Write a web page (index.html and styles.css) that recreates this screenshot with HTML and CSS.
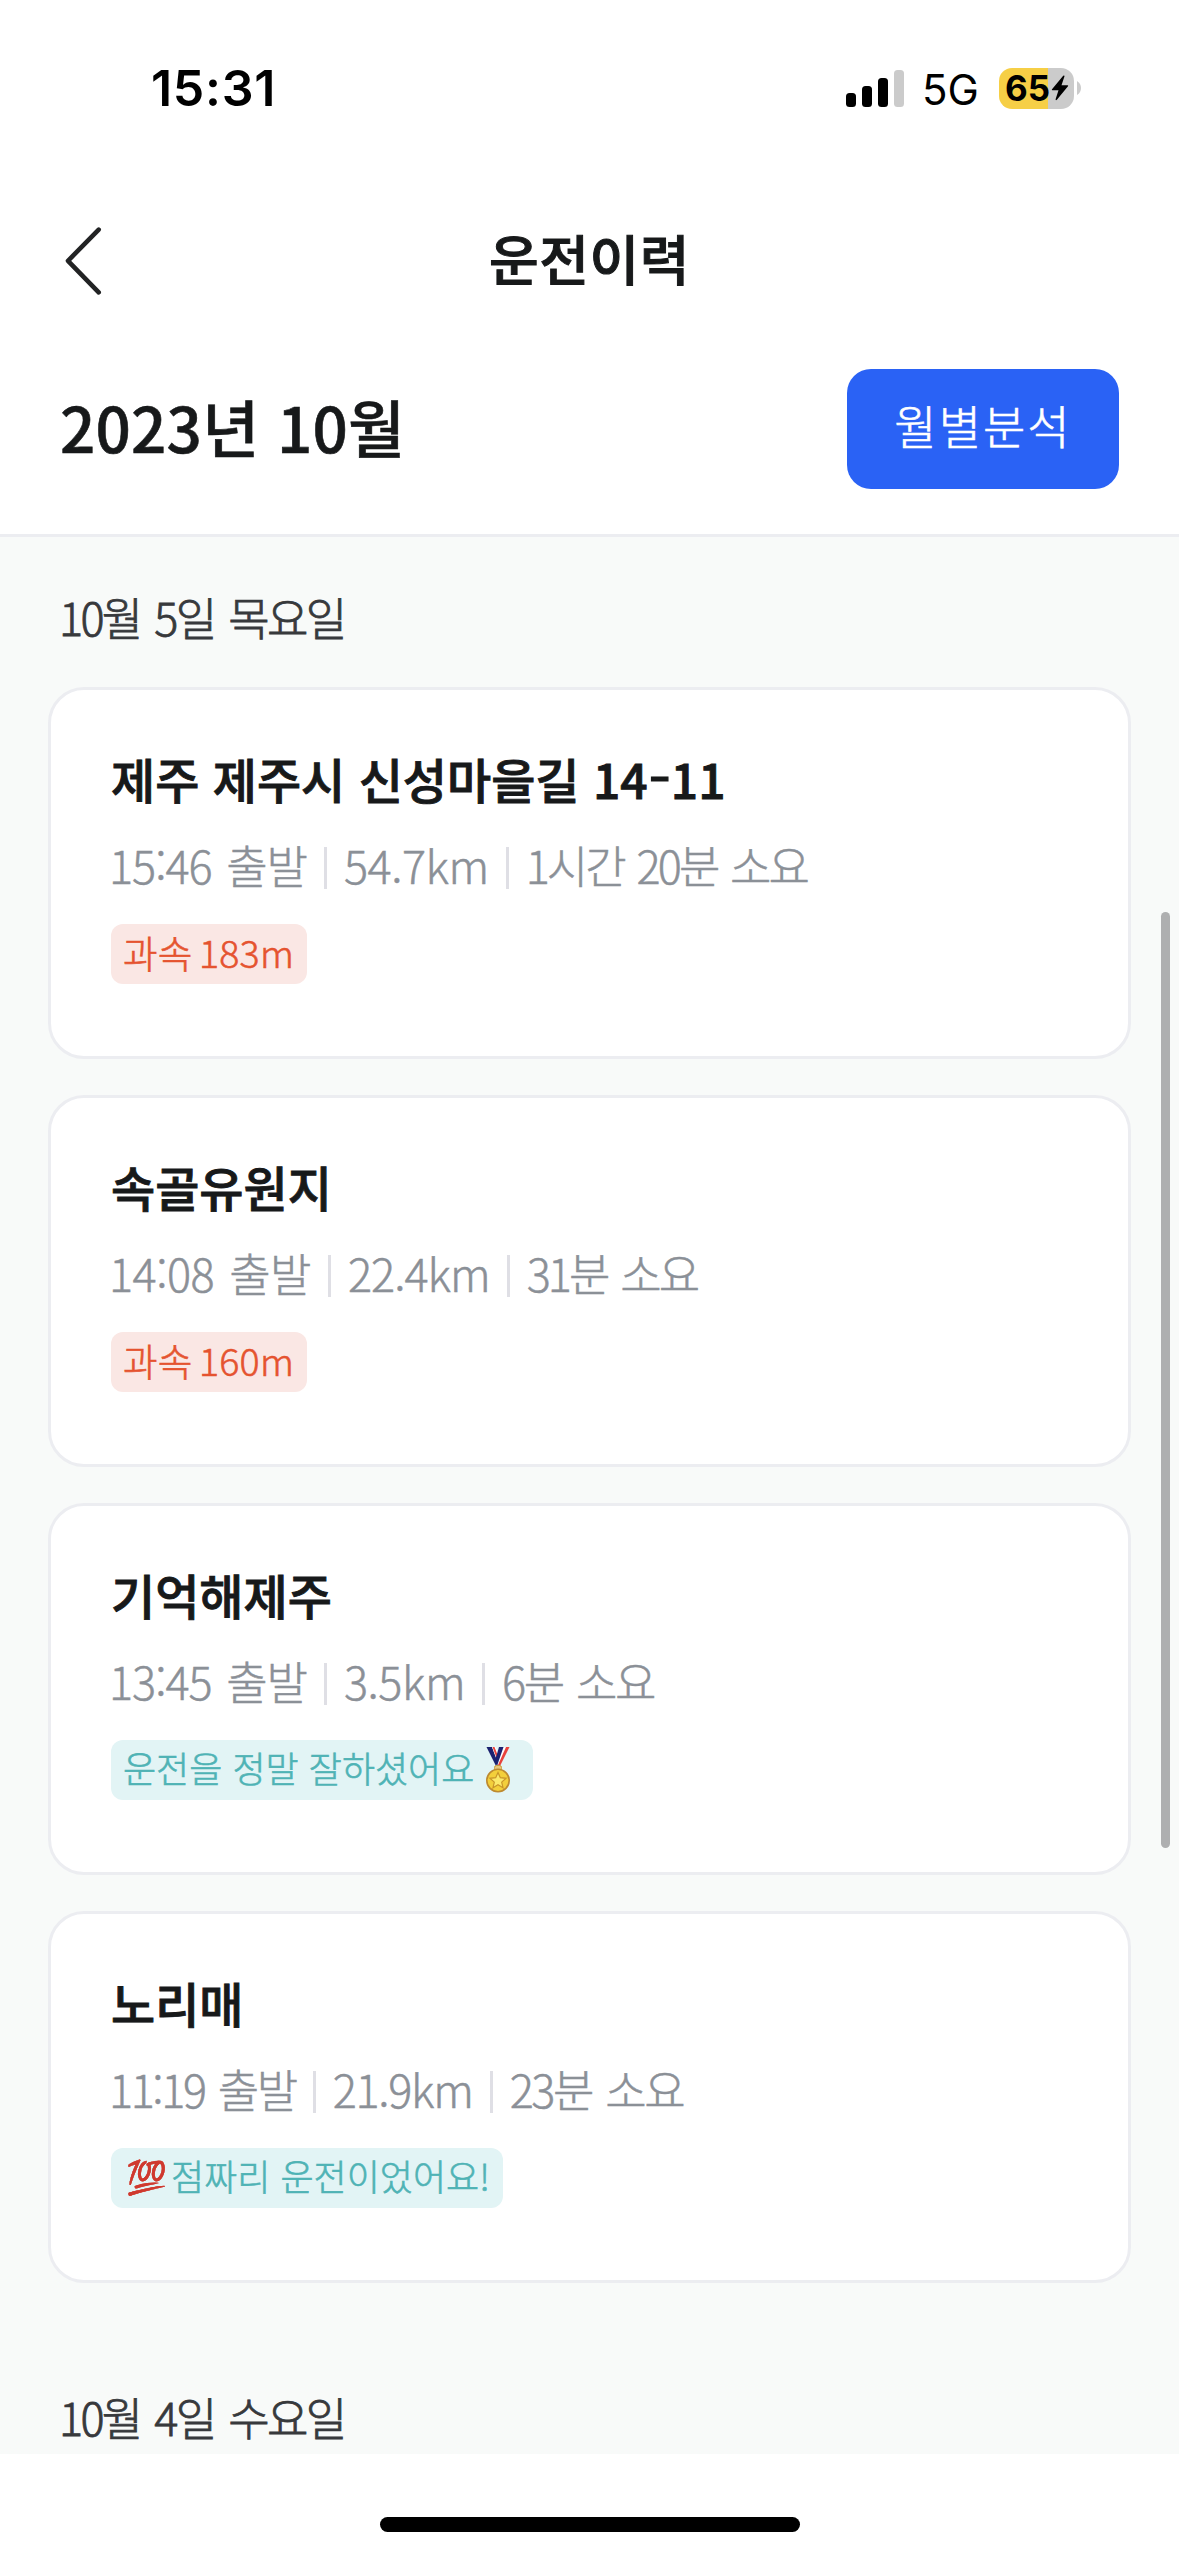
FILE: index.html
```html
<!DOCTYPE html>
<html lang="ko">
<head>
<meta charset="utf-8">
<title>운전이력</title>
<link rel="stylesheet" href="styles.css">
</head>
<body>
<div class="screen">
  <div class="status-bar">
    <span class="clock">15:31</span>
    <div class="status-icons">
      <svg class="signal" width="58" height="37" viewBox="0 0 58 37" aria-hidden="true">
        <rect x="0" y="23" width="10" height="14" rx="3.5"/>
        <rect x="16" y="16" width="10" height="21" rx="3.5"/>
        <rect x="32" y="8" width="10" height="29" rx="3.5"/>
        <rect x="48" y="0" width="10" height="37" rx="3.5" fill="#cbcbcb"/>
      </svg>
      <span class="network">5G</span>
      <div class="battery">
        <div class="battery-body">
          <span class="battery-level">65</span>
          <svg class="bolt" width="18" height="26" viewBox="0 0 18 26" aria-hidden="true">
            <path d="M12.2.8 1 14.2q-.6 1 .5 1h6L4.600 24.200q0 1.600 1.300.6L17 11.300q.6-1-.5-1h-6L13.500 1.300q0-1.300-1.300-.5z"/>
          </svg>
        </div>
        <svg width="4" height="14" viewBox="0 0 4 14" aria-hidden="true"><path d="M0 0Q4 2.500 4 7T0 14z" fill="#cbcbcb"/></svg>
      </div>
    </div>
  </div>

  <header class="nav">
    <svg class="back" width="40" height="72" viewBox="0 0 40 72" aria-label="뒤로">
      <path d="M35.700 4.600 5 35.800 35.700 67.400" fill="none" stroke="#222324" stroke-width="4.600" stroke-linecap="round" stroke-linejoin="round"/>
    </svg>
    <h1 class="nav-title">운전이력</h1>
    <span class="nav-spacer"></span>
  </header>

  <section class="summary">
    <h2 class="month">2023년 10월</h2>
    <button class="analysis-button">월별분석</button>
  </section>

  <main class="history">
    <section class="day">
      <h3 class="date">10월 5일 목요일</h3>
      <div class="trips">
        <article class="card">
          <h4 class="place">제주 제주시 신성마을길 14<span class="dash">-</span>11</h4>
          <div class="meta"><span>15:46 출발</span><i class="sep"></i><span class="loose">54.7km</span><i class="sep"></i><span class="tighter">1시간 20분 소요</span></div>
          <span class="tag tag-warn">과속 183m</span>
        </article>
        <article class="card">
          <h4 class="place">속골유원지</h4>
          <div class="meta"><span class="loose">14:08 출발</span><i class="sep"></i><span>22.4km</span><i class="sep"></i><span class="tighter">31분 소요</span></div>
          <span class="tag tag-warn">과속 160m</span>
        </article>
        <article class="card">
          <h4 class="place">기억해제주</h4>
          <div class="meta"><span>13:45 출발</span><i class="sep"></i><span class="loose">3.5km</span><i class="sep"></i><span class="tight">6분 소요</span></div>
          <span class="tag tag-good">운전을 정말 잘하셨어요
            <svg class="medal" width="26" height="46" viewBox="0 0 26 46" aria-hidden="true">
              <path d="M1.500 0H7l6 15-2 4z" fill="#1b2270"/>
              <path d="M7 0h3.500l4 10-2 5z" fill="#fff"/>
              <path d="M7.500 0h2l3.500 9-1 3z" fill="#e8423c"/>
              <path d="M24.500 0H20l-8 19h3z" fill="#e8423c"/>
              <path d="M21 0h-2.500l-6.500 16 1 2z" fill="#fff"/>
              <path d="M18.500 0H14l-3.500 12 1.500 7z" fill="#1b2270"/>
              <rect x="9.500" y="18.500" width="7" height="5" rx="2" fill="#e9c77a" stroke="#c69a3a"/>
              <circle cx="13" cy="33.500" r="11.200" fill="#f3cf3b" stroke="#bd8a31" stroke-width="1.600"/>
              <path d="m13 25.500 2.300 5.200 5.700.6-4.300 3.800 1.300 5.600-5-2.900-5 2.900 1.300-5.600L5 31.300l5.700-.6z" fill="#fbe96a" stroke="#c99528" stroke-width="1.200"/>
            </svg>
          </span>
        </article>
        <article class="card">
          <h4 class="place">노리매</h4>
          <div class="meta"><span class="tight">11:19 출발</span><i class="sep"></i><span class="snug">21.9km</span><i class="sep"></i><span class="tight">23분 소요</span></div>
          <span class="tag tag-good tag-score"><span class="emoji">💯</span>점짜리 운전이었어요!</span>
        </article>
      </div>
    </section>
    <section class="day">
      <h3 class="date">10월 4일 수요일</h3>
    </section>
    <div class="scrollbar"></div>
  </main>

  <footer class="home-area"><div class="home-indicator"></div></footer>
</div>
</body>
</html>
```
FILE: styles.css
```css
* { box-sizing: border-box; margin: 0; padding: 0; }

body {
  width: 1179px;
  background: #fff;
  color: #17191a;
  font-family: "Noto Sans CJK KR", sans-serif;
}

.screen { display: flex; flex-direction: column; height: 2556px; overflow: hidden; }

/* Status bar */
.status-bar {
  display: flex;
  justify-content: space-between;
  height: 180px;
  padding: 58px 98px 0 151px;
  color: #000;
  font-family: Inter, sans-serif;
}
.clock { font-size: 50px; font-weight: 600; line-height: 60px; letter-spacing: 0.7px; }
.status-icons { display: flex; align-items: center; height: 60px; }
.network { margin-left: 18px; width: 77px; font-size: 42px; font-weight: 400; line-height: 60px; padding-top: 3px; }
.battery { display: flex; align-items: center; gap: 3px; }
.battery-body {
  display: flex;
  align-items: center;
  width: 75px;
  height: 41px;
  border-radius: 13px;
  background: linear-gradient(90deg, #f6cf46 49px, #cbcbcb 49px);
}
.battery-level { width: 47px; padding-left: 6px; margin-right: 5px; font-size: 35px; font-weight: 700; line-height: 41px; }

/* Navigation */
.nav { display: flex; justify-content: space-between; align-items: center; height: 162px; padding: 0 63px; }
.nav-title {
  padding-bottom: 7px;
  font-size: 54px;
  font-weight: 500;
  line-height: 72px;
  letter-spacing: 0.6px;
  -webkit-text-stroke: 1px currentColor;
}
.nav-spacer { width: 40px; }

/* Month summary */
.summary {
  display: flex;
  justify-content: space-between;
  height: 195px;
  padding: 27px 60px 45px;
  border-bottom: 3px solid #ecedf1;
}
.month {
  font-size: 62px;
  font-weight: 500;
  line-height: 114px;
  letter-spacing: 0.2px;
  -webkit-text-stroke: 0.6px currentColor;
}
.analysis-button {
  width: 272px;
  height: 120px;
  padding-bottom: 11px;
  border: 0;
  border-radius: 24px;
  background: #2a62f5;
  color: #fff;
  font: 300 46px/60px "Noto Sans CJK KR", sans-serif;
  letter-spacing: 2px;
  -webkit-text-stroke: 0.6px currentColor;
}

/* Trip history */
.history {
  position: relative;
  display: flex;
  flex-direction: column;
  gap: 104px;
  height: 1917px;
  padding: 50px 48px 0;
  overflow: hidden;
  background: #f8faf9;
}
.date {
  margin-bottom: 40px;
  padding-left: 11px;
  color: #37393c;
  font-size: 45px;
  font-weight: 300;
  line-height: 60px;
  letter-spacing: -2.7px;
  word-spacing: 4px;
  -webkit-text-stroke: 0.8px currentColor;
}
.trips { display: flex; flex-direction: column; gap: 36px; }
.card {
  display: flex;
  flex-direction: column;
  align-items: flex-start;
  height: 372px;
  padding: 58px 60px;
  border: 3px solid #ecedf1;
  border-radius: 36px;
  background: #fff;
}
.place {
  margin-bottom: 27px;
  font-size: 48px;
  font-weight: 500;
  line-height: 60px;
  white-space: nowrap;
  -webkit-text-stroke: 0.9px currentColor;
}
.dash { display: inline-block; margin: 0 3px; transform: translateY(-2px) scaleX(1.3); }
.meta {
  display: flex;
  align-items: center;
  margin: 0 0 29px -2px;
  color: #8b9097;
  font-size: 45px;
  font-weight: 300;
  line-height: 60px;
  letter-spacing: -1px;
  word-spacing: 3px;
  white-space: nowrap;
  -webkit-text-stroke: 0.5px currentColor;
}
.loose { letter-spacing: -0.5px; }
.snug { letter-spacing: -1.3px; }
.tight { letter-spacing: -2.4px; }
.tighter { letter-spacing: -2.9px; }
.sep { width: 3px; height: 42px; margin: 6px 17px 0; background: #dfdfe5; }

.tag {
  display: flex;
  align-items: center;
  height: 60px;
  padding: 0 12px 6px;
  border-radius: 12px;
  font-size: 36px;
  font-weight: 300;
  line-height: 54px;
  white-space: nowrap;
  -webkit-text-stroke: 0.6px currentColor;
}
.tag-warn {
  width: 196px;
  padding-bottom: 5px;
  background: #fae7e4;
  color: #e5532f;
  font-size: 37.5px;
  letter-spacing: 0.2px;
  word-spacing: -4px;
}
.tag-good { width: 422px; background: #e2f4f5; color: #4fb3b5; }
.tag-score { width: 392px; }
.medal { margin: 6px 0 0 11px; }
.emoji { width: 48px; padding-left: 3px; font-size: 33px; filter: brightness(0.85); }

.scrollbar {
  position: absolute;
  top: 375px;
  right: 9px;
  width: 9px;
  height: 936px;
  border-radius: 5px;
  background: #aeafb0;
}

/* Home indicator */
.home-area { display: flex; justify-content: center; padding-top: 63px; }
.home-indicator { width: 420px; height: 15px; border-radius: 8px; background: #000; }
```
